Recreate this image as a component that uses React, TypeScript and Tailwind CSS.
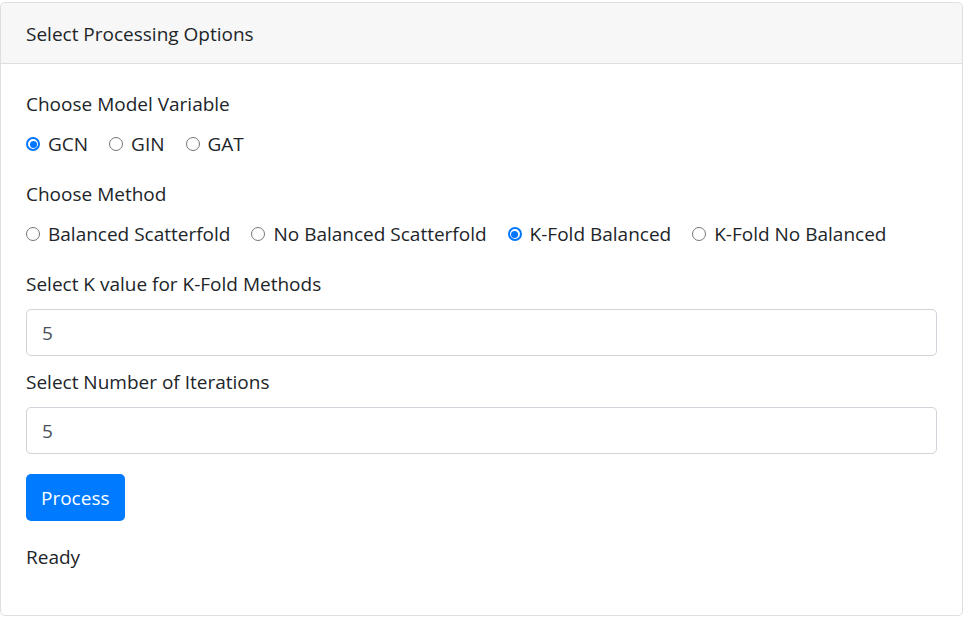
import React from "react";

function Radio({ label, checked }: { label: string; checked?: boolean }) {
  return (
    <label className="inline-flex items-center mr-[21px]">
      {checked ? (
        <span className="shrink-0 w-[14px] h-[14px] rounded-full border-[2px] border-[#0075ff] flex items-center justify-center">
          <span className="w-[7px] h-[7px] rounded-full bg-[#0075ff]" />
        </span>
      ) : (
        <span className="shrink-0 w-[14px] h-[14px] rounded-full border border-[#767676] bg-white" />
      )}
      <span className="ml-[8px]">{label}</span>
    </label>
  );
}

export default function App() {
  return (
    <div
      className="pt-[2px] pr-[2px] text-[19px] leading-[30px] text-[#212529]"
      style={{ fontFamily: '"Segoe UI", "Open Sans", sans-serif' }}
    >
      <div className="border border-[#dfdfdf] rounded-[5px] bg-white">
        <div className="bg-[#f7f7f7] border-b border-[#dfdfdf] px-[25px] pt-[16px] pb-[14px] rounded-t-[5px]">
          Select Processing Options
        </div>
        <div className="px-[25px] pt-[25px] pb-[23px]">
          <div className="mb-[20px]">
            <div className="mb-[10px]">Choose Model Variable</div>
            <div className="flex">
              <Radio label="GCN" checked />
              <Radio label="GIN" />
              <Radio label="GAT" />
            </div>
          </div>
          <div className="mb-[20px]">
            <div className="mb-[10px]">Choose Method</div>
            <div className="flex">
              <Radio label="Balanced Scatterfold" />
              <Radio label="No Balanced Scatterfold" />
              <Radio label="K-Fold Balanced" checked />
              <Radio label="K-Fold No Balanced" />
            </div>
          </div>
          <div className="mb-[10px]">Select K value for K-Fold Methods</div>
          <div className="h-[47px] border border-[#ced4da] rounded-[5px] px-[15px] flex items-center text-[#495057]">
            5
          </div>
          <div className="mt-[11px] mb-[10px]">Select Number of Iterations</div>
          <div className="h-[47px] border border-[#ced4da] rounded-[5px] px-[15px] flex items-center text-[#495057]">
            5
          </div>
          <button className="mt-[20px] h-[47px] px-[15px] bg-[#007bff] text-white rounded-[5px]">
            Process
          </button>
          <div className="mt-[21px] mb-[20px]">Ready</div>
        </div>
      </div>
    </div>
  );
}
